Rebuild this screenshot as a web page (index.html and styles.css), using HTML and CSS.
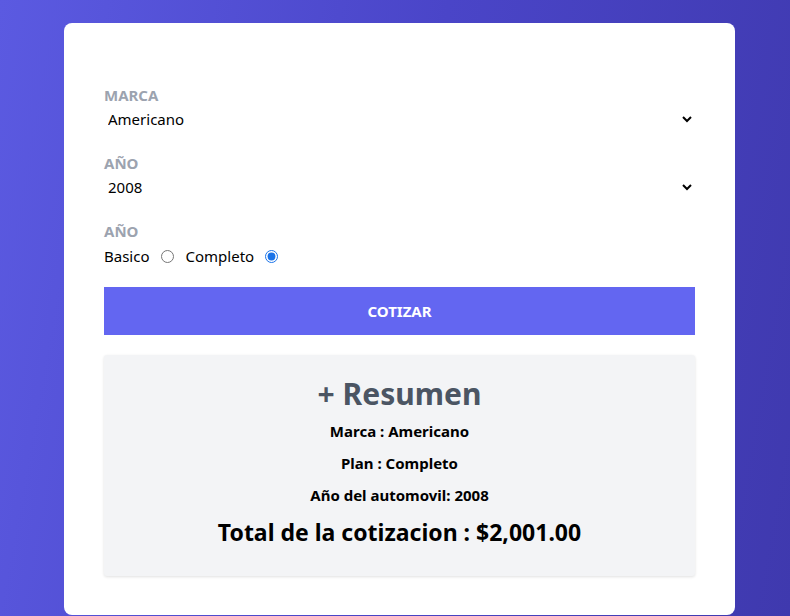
FILE: index.html
```html
<!DOCTYPE html>
<html lang="es">
<head>
<meta charset="utf-8">
<title>Cotizador</title>
<link rel="stylesheet" href="styles.css">
</head>
<body>
<main class="card">
  <form class="form">
    <div class="field">
      <label class="label" for="marca">Marca</label>
      <select id="marca" class="select">
        <option>Americano</option>
        <option>Europeo</option>
        <option>Asiatico</option>
      </select>
    </div>
    <div class="field">
      <label class="label" for="year">Año</label>
      <select id="year" class="select">
        <option>2008</option>
      </select>
    </div>
    <div class="field field-last">
      <span class="label">Año</span>
      <div class="radios">
        <label class="radio-label" for="basico">Basico</label>
        <input class="radio" type="radio" id="basico" name="plan">
        <label class="radio-label" for="completo">Completo</label>
        <input class="radio" type="radio" id="completo" name="plan" checked>
      </div>
    </div>
    <button type="button" class="button">Cotizar</button>
  </form>
  <section class="summary">
    <h2 class="summary-title">+ Resumen</h2>
    <p class="summary-line">Marca : Americano</p>
    <p class="summary-line">Plan : Completo</p>
    <p class="summary-line">Año del automovil: 2008</p>
    <p class="summary-total">Total de la cotizacion : $2,001.00</p>
  </section>
</main>
</body>
</html>
```

FILE: styles.css
```css
* { box-sizing: border-box; }
html, body { height: 100%; }
body {
  margin: 0;
  font-family: "Noto Sans", "Open Sans", sans-serif;
  background: linear-gradient(100deg, #5b5ae1 0%, #4a45c8 50%, #3f39ae 100%);
  overflow: hidden;
}
.card {
  margin: 23px 0 0 64px;
  width: 671px;
  height: 592px;
  background: #fff;
  border-radius: 8px;
  padding: 62px 40px 40px;
}
.form { display: flex; flex-direction: column; }
.field { display: flex; flex-direction: column; margin-bottom: 22px; }
.field-last { margin-bottom: 18px; }
.label {
  font-size: 15px;
  line-height: 20px;
  font-weight: 700;
  color: #9ca3af;
  text-transform: uppercase;
  margin-bottom: 2px;
}
.select {
  font-family: inherit;
  font-size: 15px;
  line-height: 20px;
  height: 24px;
  border: none;
  background: transparent;
  padding: 0;
  color: #000;
  outline: none;
}
.radios { display: flex; align-items: center; height: 26px; font-size: 15px; }
.radio-label { color: #000; }
.radio { margin: 0 12px 0 11px; width: 13px; height: 13px; accent-color: #1a73e8; }
.button {
  margin-top: 0;
  height: 48px;
  border: none;
  background: #6366f1;
  color: #fff;
  font-family: inherit;
  font-weight: 700;
  font-size: 15px;
  text-transform: uppercase;
}
.summary {
  margin-top: 20px;
  background: #f3f4f6;
  border-radius: 3px;
  box-shadow: 0 1px 3px rgba(0,0,0,0.12);
  padding: 19px 16px 24px;
  text-align: center;
  height: 221px;
}
.summary-title {
  margin: 0 0 7px;
  font-size: 30px;
  line-height: 40px;
  font-weight: 700;
  color: #4b5563;
}
.summary-line {
  margin: 0 0 12px;
  font-size: 15px;
  line-height: 20px;
  font-weight: 700;
  color: #000;
}
.summary-total {
  margin: 0;
  font-size: 23px;
  line-height: 30px;
  font-weight: 700;
  color: #000;
}
```
